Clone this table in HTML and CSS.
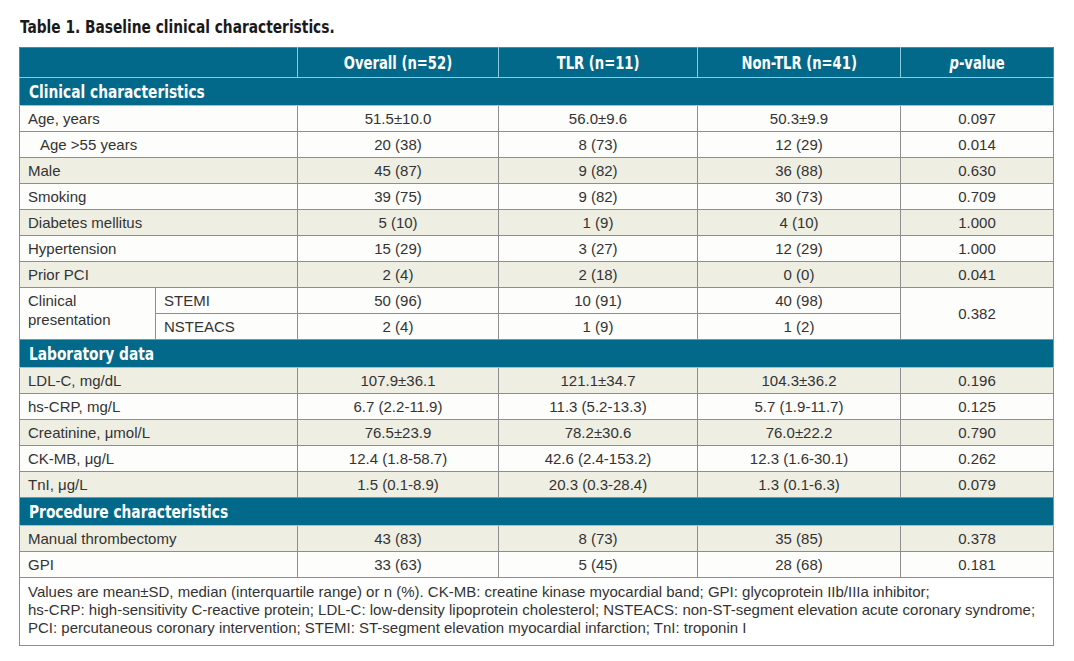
FILE: index.html
```html
<!DOCTYPE html>
<html>
<head>
<meta charset="utf-8">
<link rel="stylesheet" href="styles.css">
</head>
<body>
<div class="page">
  <h1 class="title"><span class="cond">Table 1. Baseline clinical characteristics.</span></h1>
  <table class="tbl">
    <colgroup>
      <col class="c1a"><col class="c1b"><col class="c2"><col class="c3"><col class="c4"><col class="c5">
    </colgroup>
    <thead>
      <tr class="head">
        <th colspan="2"></th>
        <th><span class="hc">Overall (n=52)</span></th>
        <th><span class="hc">TLR (n=11)</span></th>
        <th><span class="hc">Non-TLR (n=41)</span></th>
        <th><span class="hc"><i>p</i>-value</span></th>
      </tr>
    </thead>
    <tbody>
      <tr class="sec"><td colspan="6"><span class="cond">Clinical characteristics</span></td></tr>
      <tr class="w"><td colspan="2" class="lbl">Age, years</td><td>51.5±10.0</td><td>56.0±9.6</td><td>50.3±9.9</td><td>0.097</td></tr>
      <tr class="w"><td colspan="2" class="lbl ind">Age &gt;55 years</td><td>20 (38)</td><td>8 (73)</td><td>12 (29)</td><td>0.014</td></tr>
      <tr class="b"><td colspan="2" class="lbl">Male</td><td>45 (87)</td><td>9 (82)</td><td>36 (88)</td><td>0.630</td></tr>
      <tr class="w"><td colspan="2" class="lbl">Smoking</td><td>39 (75)</td><td>9 (82)</td><td>30 (73)</td><td>0.709</td></tr>
      <tr class="b"><td colspan="2" class="lbl">Diabetes mellitus</td><td>5 (10)</td><td>1 (9)</td><td>4 (10)</td><td>1.000</td></tr>
      <tr class="w"><td colspan="2" class="lbl">Hypertension</td><td>15 (29)</td><td>3 (27)</td><td>12 (29)</td><td>1.000</td></tr>
      <tr class="b"><td colspan="2" class="lbl">Prior PCI</td><td>2 (4)</td><td>2 (18)</td><td>0 (0)</td><td>0.041</td></tr>
      <tr class="w"><td rowspan="2" class="lbl multi">Clinical<br>presentation</td><td class="lbl">STEMI</td><td>50 (96)</td><td>10 (91)</td><td>40 (98)</td><td rowspan="2">0.382</td></tr>
      <tr class="w"><td class="lbl">NSTEACS</td><td>2 (4)</td><td>1 (9)</td><td>1 (2)</td></tr>
      <tr class="sec"><td colspan="6"><span class="cond">Laboratory data</span></td></tr>
      <tr class="b"><td colspan="2" class="lbl">LDL-C, mg/dL</td><td>107.9±36.1</td><td>121.1±34.7</td><td>104.3±36.2</td><td>0.196</td></tr>
      <tr class="w"><td colspan="2" class="lbl">hs-CRP, mg/L</td><td>6.7 (2.2-11.9)</td><td>11.3 (5.2-13.3)</td><td>5.7 (1.9-11.7)</td><td>0.125</td></tr>
      <tr class="b"><td colspan="2" class="lbl">Creatinine, μmol/L</td><td>76.5±23.9</td><td>78.2±30.6</td><td>76.0±22.2</td><td>0.790</td></tr>
      <tr class="w"><td colspan="2" class="lbl">CK-MB, μg/L</td><td>12.4 (1.8-58.7)</td><td>42.6 (2.4-153.2)</td><td>12.3 (1.6-30.1)</td><td>0.262</td></tr>
      <tr class="b"><td colspan="2" class="lbl">TnI, μg/L</td><td>1.5 (0.1-8.9)</td><td>20.3 (0.3-28.4)</td><td>1.3 (0.1-6.3)</td><td>0.079</td></tr>
      <tr class="sec"><td colspan="6"><span class="cond">Procedure characteristics</span></td></tr>
      <tr class="b"><td colspan="2" class="lbl">Manual thrombectomy</td><td>43 (83)</td><td>8 (73)</td><td>35 (85)</td><td>0.378</td></tr>
      <tr class="w"><td colspan="2" class="lbl">GPI</td><td>33 (63)</td><td>5 (45)</td><td>28 (68)</td><td>0.181</td></tr>
      <tr class="foot"><td colspan="6">Values are mean±SD, median (interquartile range) or n (%). CK-MB: creatine kinase myocardial band; GPI: glycoprotein IIb/IIIa inhibitor;<br>hs-CRP: high-sensitivity C-reactive protein; LDL-C: low-density lipoprotein cholesterol; NSTEACS: non-ST-segment elevation acute coronary syndrome;<br>PCI: percutaneous coronary intervention; STEMI: ST-segment elevation myocardial infarction; TnI: troponin I</td></tr>
    </tbody>
  </table>
</div>
</body>
</html>
```

FILE: styles.css
```css
html, body {
  margin: 0;
  padding: 0;
  background: #ffffff;
}

.page {
  padding: 17px 0 0 19px;
  font-family: "Liberation Sans", Arial, sans-serif;
}

.title {
  margin: 0 0 10px 1px;
  font-family: "DejaVu Sans Condensed", "DejaVu Sans", sans-serif;
  font-weight: bold;
  font-size: 17px;
  line-height: 20px;
  color: #1a1a1a;
}

.cond {
  display: inline-block;
  transform: scaleX(0.9);
  transform-origin: left center;
  white-space: nowrap;
}

.hc {
  display: inline-block;
  transform: scaleX(0.86);
  transform-origin: center center;
  white-space: nowrap;
}

.tbl {
  border-collapse: collapse;
  table-layout: fixed;
  width: 1035px;
  border: 1px solid #7a7a7a;
  font-size: 15px;
  color: #333333;
}

.c1a { width: 136px; }
.c1b { width: 142px; }
.c2 { width: 201px; }
.c3 { width: 199px; }
.c4 { width: 203px; }
.c5 { width: 153px; }

.head th {
  background: #03698a;
  color: #ffffff;
  height: 29px;
  padding: 0;
  font-family: "DejaVu Sans Condensed", "DejaVu Sans", sans-serif;
  font-weight: bold;
  font-size: 17px;
  text-align: center;
  border-left: 1px solid #8ccbdd;
  border-bottom: 1px solid #8ccbdd;
}

.head th:first-child {
  border-left: none;
}

tbody td {
  height: 25px;
  padding: 0;
  text-align: center;
  border: 1px solid #8e8e8e;
  line-height: 18px;
}

tbody .sec td {
  background: #03698a;
  color: #ffffff;
  height: 27px;
  padding: 0 0 0 9px;
  text-align: left;
  font-family: "DejaVu Sans Condensed", "DejaVu Sans", sans-serif;
  font-weight: bold;
  font-size: 17px;
  border-bottom: 1px solid #8ccbdd;
}

.w td {
  background: #fdfdfb;
}

.b td {
  background: #eeeee3;
}

tbody td.lbl {
  text-align: left;
  padding-left: 8px;
}

tbody td.ind {
  padding-left: 20px;
}

tbody td.multi {
  vertical-align: top;
  padding-top: 3px;
  line-height: 19px;
}

tbody .foot td {
  background: #ffffff;
  text-align: left;
  padding: 5px 8px 8px 8px;
  line-height: 18px;
}
```
